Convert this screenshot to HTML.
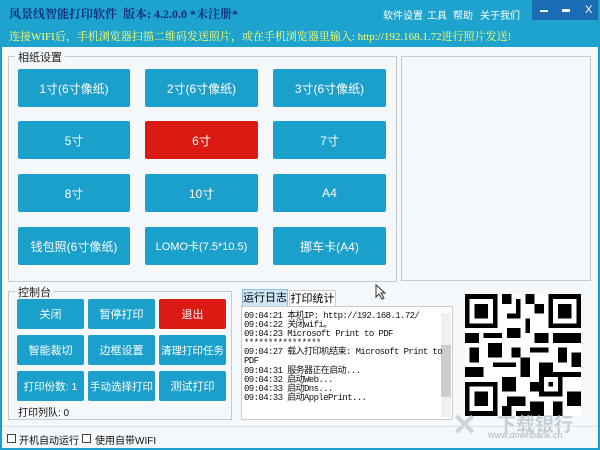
<!DOCTYPE html>
<html><head><meta charset="utf-8"><style>
*{margin:0;padding:0;box-sizing:border-box}
body{width:600px;height:450px;overflow:hidden;background:#1d9fcc;font-family:"Liberation Sans","Noto Sans CJK SC",sans-serif;position:relative}
.a{position:absolute}
.hdr{left:0;top:0;width:600px;height:47px;background:#1ea3cf}
.t{left:9px;top:5px;font-size:12px;font-weight:bold;color:#0b2f7c;font-family:"Liberation Serif","Noto Serif CJK SC",serif}
.menu{top:7px;font-size:10px;color:#fff}
.ctl{left:532px;top:0;width:66px;height:20px;background:#1a6cb4}
.url{left:9px;top:28px;font-size:11px;color:#ffff66;font-family:"Liberation Serif","Noto Serif CJK SC",serif}
.body{left:2px;top:47px;width:596px;height:401px;background:#f4f8fb}
.grp{border:1px solid #c8cbce}
.lg{font-size:11px;color:#222;background:#f4f8fb;padding:0 3px}
.b{position:absolute;background:#1b9fcb;color:#fff;font-size:12px;display:flex;align-items:center;justify-content:center;border-radius:2px;white-space:nowrap}
.c{font-size:11px}
.r{background:#dc1a14}
.log{font-family:"Liberation Mono","Noto Sans CJK SC",monospace;font-size:9px;line-height:9.1px;color:#111;white-space:nowrap;letter-spacing:-0.6px}
</style></head><body>
<div class="a hdr"></div>
<div class="a t">风景线智能打印软件 &nbsp;版本: 4.2.0.0 *未注册*</div>
<div class="a menu" style="left:383px">软件设置</div>
<div class="a menu" style="left:427px">工具</div>
<div class="a menu" style="left:453px">帮助</div>
<div class="a menu" style="left:480px">关于我们</div>
<div class="a ctl"></div>
<div class="a" style="left:540px;top:10px;width:8px;height:2px;background:#fff"></div>
<div class="a" style="left:562px;top:9px;width:8px;height:3px;background:#fff"></div>
<div class="a" style="left:585px;top:4px;color:#fff;font-size:11px">X</div>
<div class="a url">连接WIFI后，手机浏览器扫描二维码发送照片，或在手机浏览器里输入: http://192.168.1.72进行照片发送!</div>
<div class="a body"></div>

<div class="a grp" style="left:8px;top:56px;width:389px;height:226px"></div>
<div class="a lg" style="left:15px;top:49px">相纸设置</div>
<div class="b" style="left:18px;top:69px;width:112px;height:38px">1寸(6寸像纸)</div>
<div class="b" style="left:145px;top:69px;width:113px;height:38px">2寸(6寸像纸)</div>
<div class="b" style="left:273px;top:69px;width:113px;height:38px">3寸(6寸像纸)</div>
<div class="b" style="left:18px;top:121px;width:112px;height:38px">5寸</div>
<div class="b r" style="left:145px;top:121px;width:113px;height:38px">6寸</div>
<div class="b" style="left:273px;top:121px;width:113px;height:38px">7寸</div>
<div class="b" style="left:18px;top:174px;width:112px;height:38px">8寸</div>
<div class="b" style="left:145px;top:174px;width:113px;height:38px">10寸</div>
<div class="b" style="left:273px;top:174px;width:113px;height:38px">A4</div>
<div class="b" style="left:18px;top:227px;width:112px;height:38px">钱包照(6寸像纸)</div>
<div class="b" style="left:145px;top:227px;width:113px;height:38px;font-size:11px">LOMO卡(7.5*10.5)</div>
<div class="b" style="left:273px;top:227px;width:113px;height:38px">挪车卡(A4)</div>

<div class="a grp" style="left:401px;top:56px;width:190px;height:225px"></div>

<div class="a grp" style="left:8px;top:291px;width:224px;height:129px"></div>
<div class="a lg" style="left:15px;top:284px">控制台</div>
<div class="b c" style="left:17px;top:299px;width:67px;height:30px">关闭</div>
<div class="b c" style="left:88px;top:299px;width:67px;height:30px">暂停打印</div>
<div class="b c r" style="left:159px;top:299px;width:67px;height:30px">退出</div>
<div class="b c" style="left:17px;top:335px;width:67px;height:30px">智能裁切</div>
<div class="b c" style="left:88px;top:335px;width:67px;height:30px">边框设置</div>
<div class="b" style="left:159px;top:335px;width:67px;height:30px;font-size:10.5px">清理打印任务</div>
<div class="b" style="left:17px;top:371px;width:67px;height:30px;font-size:10.5px">打印份数: 1</div>
<div class="b" style="left:88px;top:371px;width:67px;height:30px;font-size:10.5px">手动选择打印</div>
<div class="b c" style="left:159px;top:371px;width:67px;height:30px">测试打印</div>
<div class="a" style="left:18px;top:404px;font-size:10px;color:#111">打印列队: 0</div>

<div class="a" style="left:242px;top:289px;width:46px;height:18px;background:#cfe6f7;border:1px solid #8cc0e6;font-size:11px;text-align:center;line-height:16px">运行日志</div>
<div class="a" style="left:289px;top:290px;width:47px;height:17px;background:#fff;border:1px solid #ccc;font-size:11px;text-align:center;line-height:16px">打印统计</div>
<div class="a" style="left:241px;top:306px;width:212px;height:114px;background:#fff;border:1px solid #ccc"></div>
<div class="a" style="left:441px;top:313px;width:10px;height:104px;background:#f0f0f0"></div>
<div class="a" style="left:441px;top:345px;width:10px;height:52px;background:#cdcdcd"></div>
<div class="a log" style="left:244px;top:312px;width:198px">09:04:21 本机IP: http://192.168.1.72/<br>09:04:22 关闭wifi。<br>09:04:23 Microsoft Print to PDF<br>****************<br>09:04:27 载入打印机结束: Microsoft Print to<br>PDF<br>09:04:31 服务器正在启动...<br>09:04:32 启动Web...<br>09:04:33 启动Dns...<br>09:04:33 启动ApplePrint...</div>

<svg class="a" style="left:465px;top:294px" width="116" height="122" viewBox="0 0 25 25" preserveAspectRatio="none" shape-rendering="crispEdges">
<rect width="25" height="25" fill="#fff"/>
<g fill="#000">
<rect x="0" y="0" width="7" height="7"/><rect x="1" y="1" width="5" height="5" fill="#fff"/><rect x="2" y="2" width="3" height="3"/>
<rect x="18" y="0" width="7" height="7"/><rect x="19" y="1" width="5" height="5" fill="#fff"/><rect x="20" y="2" width="3" height="3"/>
<rect x="0" y="18" width="7" height="7"/><rect x="1" y="19" width="5" height="5" fill="#fff"/><rect x="2" y="20" width="3" height="3"/>
<rect x="8" y="0" width="2" height="2"/><rect x="11" y="1" width="1" height="3"/><rect x="13" y="0" width="2" height="2"/><rect x="15" y="2" width="2" height="2"/><rect x="9" y="4" width="3" height="1"/><rect x="13" y="5" width="1" height="3"/>
<rect x="0" y="8" width="3" height="2"/><rect x="4" y="8" width="4" height="1"/><rect x="9" y="7" width="3" height="2"/><rect x="15" y="8" width="3" height="2"/><rect x="19" y="8" width="6" height="2"/>
<rect x="1" y="11" width="2" height="3"/><rect x="5" y="10" width="3" height="3"/><rect x="10" y="11" width="2" height="2"/><rect x="14" y="11" width="4" height="1"/><rect x="20" y="11" width="2" height="3"/><rect x="23" y="12" width="2" height="3"/>
<rect x="0" y="15" width="4" height="2"/><rect x="6" y="14" width="5" height="1"/><rect x="12" y="13" width="2" height="4"/><rect x="16" y="14" width="3" height="2"/><rect x="21" y="16" width="4" height="1"/>
<rect x="8" y="17" width="3" height="3"/><rect x="14" y="18" width="2" height="2"/><rect x="16" y="16" width="5" height="5"/><rect x="17" y="17" width="3" height="3" fill="#fff"/><rect x="18" y="18" width="1" height="1"/>
<rect x="9" y="21" width="4" height="2"/><rect x="14" y="22" width="3" height="3"/><rect x="19" y="22" width="2" height="3"/><rect x="22" y="20" width="3" height="3"/><rect x="8" y="23" width="2" height="2"/><rect x="11" y="24" width="3" height="1"/>
</g></svg>
<div class="a" style="left:497px;top:410px;font-size:19px;font-weight:bold;color:#b9c4cc;opacity:.8">下载银行</div>
<div class="a" style="left:488px;top:430px;font-size:9px;color:#aab;opacity:.9">www.downbank.cn</div>
<div class="a" style="left:452px;top:408px;font-size:30px;color:#bcc3c8;opacity:.7;font-weight:bold">✕</div>

<div class="a" style="left:2px;top:426px;width:596px;height:1px;background:#dde2e6"></div>
<div class="a" style="left:7px;top:434px;width:9px;height:9px;border:1px solid #444;background:#fff"></div>
<div class="a" style="left:19px;top:432px;font-size:10px;color:#111">开机自动运行</div>
<div class="a" style="left:82px;top:434px;width:9px;height:9px;border:1px solid #444;background:#fff"></div>
<div class="a" style="left:95px;top:432px;font-size:10px;color:#111">使用自带WIFI</div>
<svg class="a" style="left:375px;top:284px" width="12" height="16"><path d="M1 1 L1 13 L4 10 L7 15 L9 14 L6 9 L10 9 Z" fill="#fff" stroke="#333"/></svg>
</body></html>
